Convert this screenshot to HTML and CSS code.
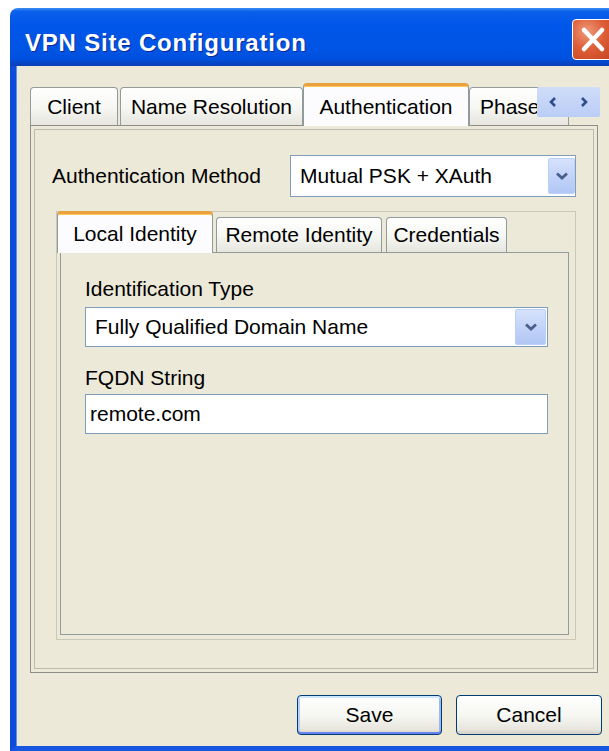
FILE: index.html
```html
<!DOCTYPE html>
<html lang="en">
<head>
<meta charset="utf-8">
<title>VPN Site Configuration</title>
<link rel="stylesheet" href="styles.css">
</head>
<body>
<div class="window">
  <div class="titlebar">
    <span class="title">VPN Site Configuration</span>
    <button class="close" aria-label="Close">
      <svg width="40" height="39" viewBox="0 0 40 39"><path d="M11 10 L29 29 M29 10 L11 29" stroke="#fff" stroke-width="4.5" stroke-linecap="round"/></svg>
    </button>
  </div>
  <div class="frame">
    <div class="tabs outer-tabs">
      <div class="tab tab-client">Client</div>
      <div class="tab tab-names">Name Resolution</div>
      <div class="tab tab-auth sel">Authentication</div>
      <div class="tab tab-phase">Phase 1</div>
      <div class="tab-scroll">
        <span class="spin"><svg width="8" height="12" viewBox="0 0 8 12"><path d="M6 2 L2 6 L6 10" fill="none" stroke="#2E4C8F" stroke-width="2.6"/></svg></span>
        <span class="spin"><svg width="8" height="12" viewBox="0 0 8 12"><path d="M2 2 L6 6 L2 10" fill="none" stroke="#2E4C8F" stroke-width="2.6"/></svg></span>
      </div>
    </div>
    <div class="panel outer-panel">
      <div class="row">
        <span class="label">Authentication Method</span>
        <div class="combo combo-method">
          <span class="combo-text">Mutual PSK + XAuth</span>
          <span class="drop drop-method"><svg width="14" height="10" viewBox="0 0 14 10"><path d="M2 2.5 L7 7 L12 2.5" fill="none" stroke="#4A5F8A" stroke-width="2.8"/></svg></span>
        </div>
      </div>
      <div class="group">
        <div class="tabs inner-tabs">
          <div class="tab sel tab-local">Local Identity</div>
          <div class="tab tab-remote">Remote Identity</div>
          <div class="tab tab-cred">Credentials</div>
        </div>
        <div class="panel inner-panel">
          <span class="field-label">Identification Type</span>
          <div class="combo combo-id">
            <span class="combo-text">Fully Qualified Domain Name</span>
            <span class="drop drop-id"><svg width="14" height="10" viewBox="0 0 14 10"><path d="M2 2.5 L7 7 L12 2.5" fill="none" stroke="#4A5F8A" stroke-width="2.8"/></svg></span>
          </div>
          <span class="field-label fqdn">FQDN String</span>
          <div class="textbox">remote.com</div>
        </div>
      </div>
    </div>
    <div class="buttons">
      <button class="btn btn-default">Save</button>
      <button class="btn">Cancel</button>
    </div>
  </div>
</div>
</body>
</html>
```

FILE: styles.css
```css
html, body {
  margin: 0;
  padding: 0;
  overflow: hidden;
  background: #ffffff;
}

body {
  font-family: "Liberation Sans", Arial, sans-serif;
  font-size: 21px;
  color: #000;
}

/* window chrome */
.window {
  margin: 8px 0 0 10px;
  width: 620px;
}

.titlebar {
  height: 58px;
  display: flex;
  align-items: flex-start;
  border-radius: 8px 8px 0 0;
  background: linear-gradient(180deg, #3C8EF3 0%, #0A5FEB 6%, #0056E8 30%, #0054E5 70%, #0050DE 88%, #0A3FB4 100%);
}

.title {
  margin: 23px 0 0 15px;
  font-weight: bold;
  font-size: 24px;
  line-height: 24px;
  letter-spacing: 0.8px;
  color: #fff;
  text-shadow: 1px 1px 0 #0B2A8C;
}

.close {
  margin: 11px 16px 0 auto;
  width: 42px;
  height: 41px;
  padding: 0;
  border: 1px solid #fff;
  border-radius: 4px;
  background: radial-gradient(circle at 35% 30%, #EE9A7C 0%, #DE5E38 45%, #C44420 100%);
  display: flex;
  align-items: center;
  justify-content: center;
}

.frame {
  background: #ECE9D8;
  border-left: 6px solid #0D4CD9;
  border-bottom: 5px solid #1656E0;
  box-shadow: inset 1px 0 0 #5D8FF0;
  padding: 17px 0 11px 0;
}

/* tab strips */
.tabs {
  display: flex;
  align-items: flex-end;
  position: relative;
}

.tab {
  box-sizing: border-box;
  flex: none;
  height: 38px;
  border: 1px solid #919B9C;
  border-bottom: none;
  border-radius: 4px 4px 0 0;
  background: linear-gradient(180deg, #FFFFFF 0%, #F6F6F2 55%, #E6E5DE 100%);
  display: flex;
  align-items: center;
  justify-content: center;
  white-space: nowrap;
  overflow: hidden;
}

.tab.sel {
  position: relative;
  z-index: 1;
  margin-bottom: -1px;
  background: #FCFCFE;
  border-top: 3px solid #E9A03E;
  box-shadow: inset 0 1px 0 #FFC95A;
}

.outer-tabs {
  margin-left: 14px;
  width: 570px;
  height: 42px;
}

.tab-client { width: 88px; margin-right: 2px; }
.tab-names { width: 183px; }
.tab-auth { width: 166px; height: 43px; padding-top: 1px; }
.tab-phase { width: 100px; justify-content: flex-start; padding-left: 10px; }

.tab-scroll {
  position: absolute;
  right: 0;
  top: 4px;
  z-index: 2;
  width: 63px;
  height: 30px;
  display: flex;
  background: linear-gradient(180deg, #D0DDF9 0%, #BACDF6 100%);
  border-radius: 2px;
}

.spin {
  flex: 1;
  display: flex;
  align-items: center;
  justify-content: center;
}

/* tab pages */
.panel {
  box-sizing: border-box;
  background: #ECE9D8;
  border: 1px solid #8E8F8B;
}

.outer-panel {
  margin-left: 14px;
  width: 568px;
  height: 548px;
  padding: 29px 21px 32px 21px;
  display: flex;
  flex-direction: column;
  box-shadow: inset 0 0 0 3px #ECE9D8, inset 0 0 0 4px #BDBBAF;
}

.row {
  display: flex;
  align-items: center;
  height: 42px;
}

.group {
  flex: 1;
  margin: 14px 0 0 4px;
  border: 1px solid #CBC8B8;
  padding: 0 6px 4px 3px;
  display: flex;
  flex-direction: column;
}

.inner-tabs {
  margin-top: -1px;
  height: 41px;
}

.inner-tabs .tab { height: 35px; }
.inner-tabs .tab.sel { height: 42px; }

.tab-local { width: 156px; margin-left: -3px; }
.tab-remote { width: 166px; margin-left: 3px; }
.tab-cred { width: 121px; margin-left: 4px; }

.inner-panel {
  flex: 1;
  padding: 24px 20px 0 24px;
  display: flex;
  flex-direction: column;
  border-color: #919B9C;
}

.field-label {
  display: block;
  line-height: 24px;
}

.fqdn { margin-top: 19px; }

/* combo boxes and text fields */
.combo {
  box-sizing: border-box;
  display: flex;
  align-items: stretch;
  background: #fff;
  border: 1px solid #7F9DB9;
}

.combo-text {
  flex: 1;
  display: flex;
  align-items: center;
  white-space: nowrap;
}

.combo-method {
  margin-left: auto;
  width: 286px;
  height: 42px;
  padding: 2px 0 2px 0;
}

.combo-method .combo-text { padding-left: 9px; }

.combo-id {
  margin-top: 6px;
  height: 40px;
  padding: 1px;
}

.combo-id .combo-text { padding-left: 8px; }

.drop {
  box-sizing: border-box;
  display: flex;
  align-items: center;
  justify-content: center;
  border: 1px solid #BCCFF6;
  border-radius: 2px;
  background: linear-gradient(180deg, #D6E2FC 0%, #BFD1F8 60%, #B2C7F5 100%);
}

.drop-method { width: 27px; }
.drop-id { width: 31px; }

.textbox {
  box-sizing: border-box;
  margin-top: 4px;
  height: 40px;
  border: 1px solid #7F9DB9;
  background: #fff;
  padding-left: 4px;
  display: flex;
  align-items: center;
}

/* dialog buttons */
.buttons {
  display: flex;
  gap: 14px;
  margin-top: 22px;
  padding-left: 281px;
}

.btn {
  font: inherit;
  color: #000;
  width: 146px;
  height: 40px;
  padding: 0;
  border: 1px solid #003C74;
  border-radius: 4px;
  background: linear-gradient(180deg, #FFFFFF 0%, #F5F5F1 55%, #E7E5DD 88%, #D6D0C5 100%);
}

.btn-default {
  width: 145px;
  box-shadow: inset 0 2px 0 #CEE7FF, inset 0 -2px 0 #6982EE, inset 2px 0 0 #B8D0F7, inset -2px 0 0 #9DB7F0;
}
```
